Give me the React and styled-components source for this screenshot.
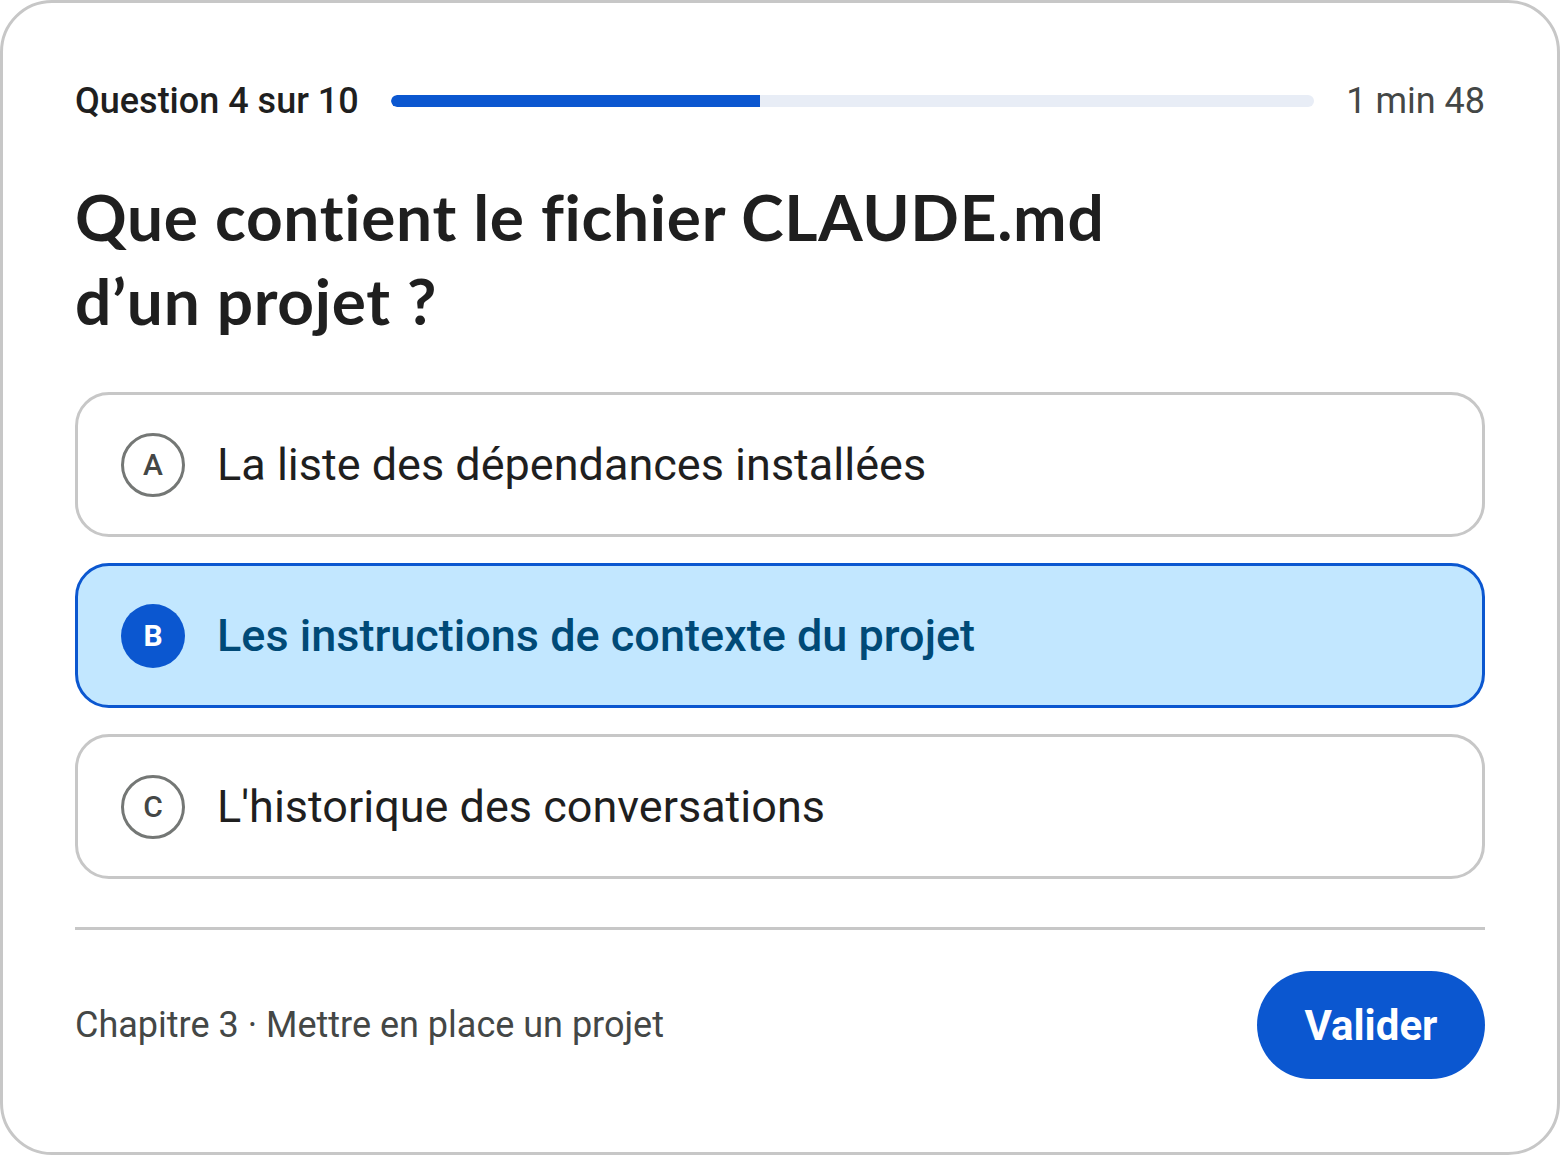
import React, { useState } from 'react';
import styled, { createGlobalStyle } from 'styled-components';

const GlobalStyle = createGlobalStyle`
  html, body {
    margin: 0;
    padding: 0;
    background: #ffffff;
  }
  * {
    box-sizing: border-box;
  }
`

const Card = styled.div`
  width: 1560px;
  height: 1155px;
  background: #ffffff;
  border: 3px solid #c7c7c7;
  border-radius: 52px;
  padding: 68px 72px 0 72px;
  display: flex;
  flex-direction: column;
  font-family: Roboto, "Liberation Sans", sans-serif;
`

const TopBar = styled.div`
  display: flex;
  align-items: center;
  height: 60px;
  gap: 32px;
`

const Counter = styled.span`
  font-size: 36px;
  font-weight: 500;
  color: #1f1f1f;
  white-space: nowrap;
`

const Track = styled.div`
  flex: 1;
  height: 12px;
  border-radius: 6px;
  background: #e8edf6;
  overflow: hidden;
`

const Fill = styled.div`
  height: 100%;
  background: #0b57d0;
  border-radius: 6px 0 0 6px;
`

const Timer = styled.span`
  font-size: 36px;
  color: #444746;
  white-space: nowrap;
`

const Question = styled.h1`
  margin: 44px 0 49px 0;
  font-family: Lato, "Noto Sans", sans-serif;
  font-weight: 700;
  font-size: 64px;
  line-height: 84px;
  letter-spacing: 0.7px;
  color: #1f1f1f;
`

const Options = styled.div`
  display: flex;
  flex-direction: column;
  gap: 26px;
`

const Option = styled.button`
  display: flex;
  align-items: center;
  gap: 32px;
  height: 145px;
  padding: 0 0 0 43px;
  border-radius: 34px;
  border: 3px solid ${p => (p.$selected ? '#0b57d0' : '#c7c7c7')};
  background: ${p => (p.$selected ? '#c2e7ff' : '#ffffff')};
  font-family: inherit;
  text-align: left;
  cursor: pointer;
`

const Letter = styled.span`
  width: 64px;
  height: 64px;
  flex: none;
  border-radius: 50%;
  display: flex;
  align-items: center;
  justify-content: center;
  font-size: 30px;
  font-weight: ${p => (p.$selected ? 700 : 500)};
  border: ${p => (p.$selected ? 'none' : '3px solid #747775')};
  background: ${p => (p.$selected ? '#0b57d0' : 'transparent')};
  color: ${p => (p.$selected ? '#ffffff' : '#444746')};
`

const Label = styled.span`
  font-size: 45px;
  font-weight: ${p => (p.$selected ? 500 : 400)};
  color: ${p => (p.$selected ? '#004a77' : '#1f1f1f')};
`

const Divider = styled.hr`
  margin: 48px 0 0 0;
  border: none;
  border-top: 3px solid #c7c7c7;
`

const Footer = styled.div`
  display: flex;
  align-items: center;
  justify-content: space-between;
  margin-top: 41px;
`

const Chapter = styled.span`
  font-size: 36px;
  color: #444746;
`

const Submit = styled.button`
  height: 108px;
  width: 228px;
  padding: 0;
  border: none;
  border-radius: 54px;
  background: #0b57d0;
  color: #ffffff;
  font-family: inherit;
  font-size: 42px;
  font-weight: 700;
  cursor: pointer;
`

const answers = [
  { key: 'A', text: 'La liste des dépendances installées' },
  { key: 'B', text: 'Les instructions de contexte du projet' },
  { key: 'C', text: "L'historique des conversations" },
];

export default function App() {
  const [selected, setSelected] = useState('B');
  const progress = 4 / 10;

  return (
    <>
      <GlobalStyle />
      <Card>
        <TopBar>
          <Counter>Question 4 sur 10</Counter>
          <Track>
            <Fill style={{ width: `${progress * 100}%` }} />
          </Track>
          <Timer>1 min 48</Timer>
        </TopBar>

        <Question>
          Que contient le fichier CLAUDE.md
          <br />
          d’un projet ?
        </Question>

        <Options>
          {answers.map(a => (
            <Option key={a.key} $selected={selected === a.key} onClick={() => setSelected(a.key)}>
              <Letter $selected={selected === a.key}>{a.key}</Letter>
              <Label $selected={selected === a.key}>{a.text}</Label>
            </Option>
          ))}
        </Options>

        <Divider />

        <Footer>
          <Chapter>Chapitre 3 · Mettre en place un projet</Chapter>
          <Submit>Valider</Submit>
        </Footer>
      </Card>
    </>
  );
}
